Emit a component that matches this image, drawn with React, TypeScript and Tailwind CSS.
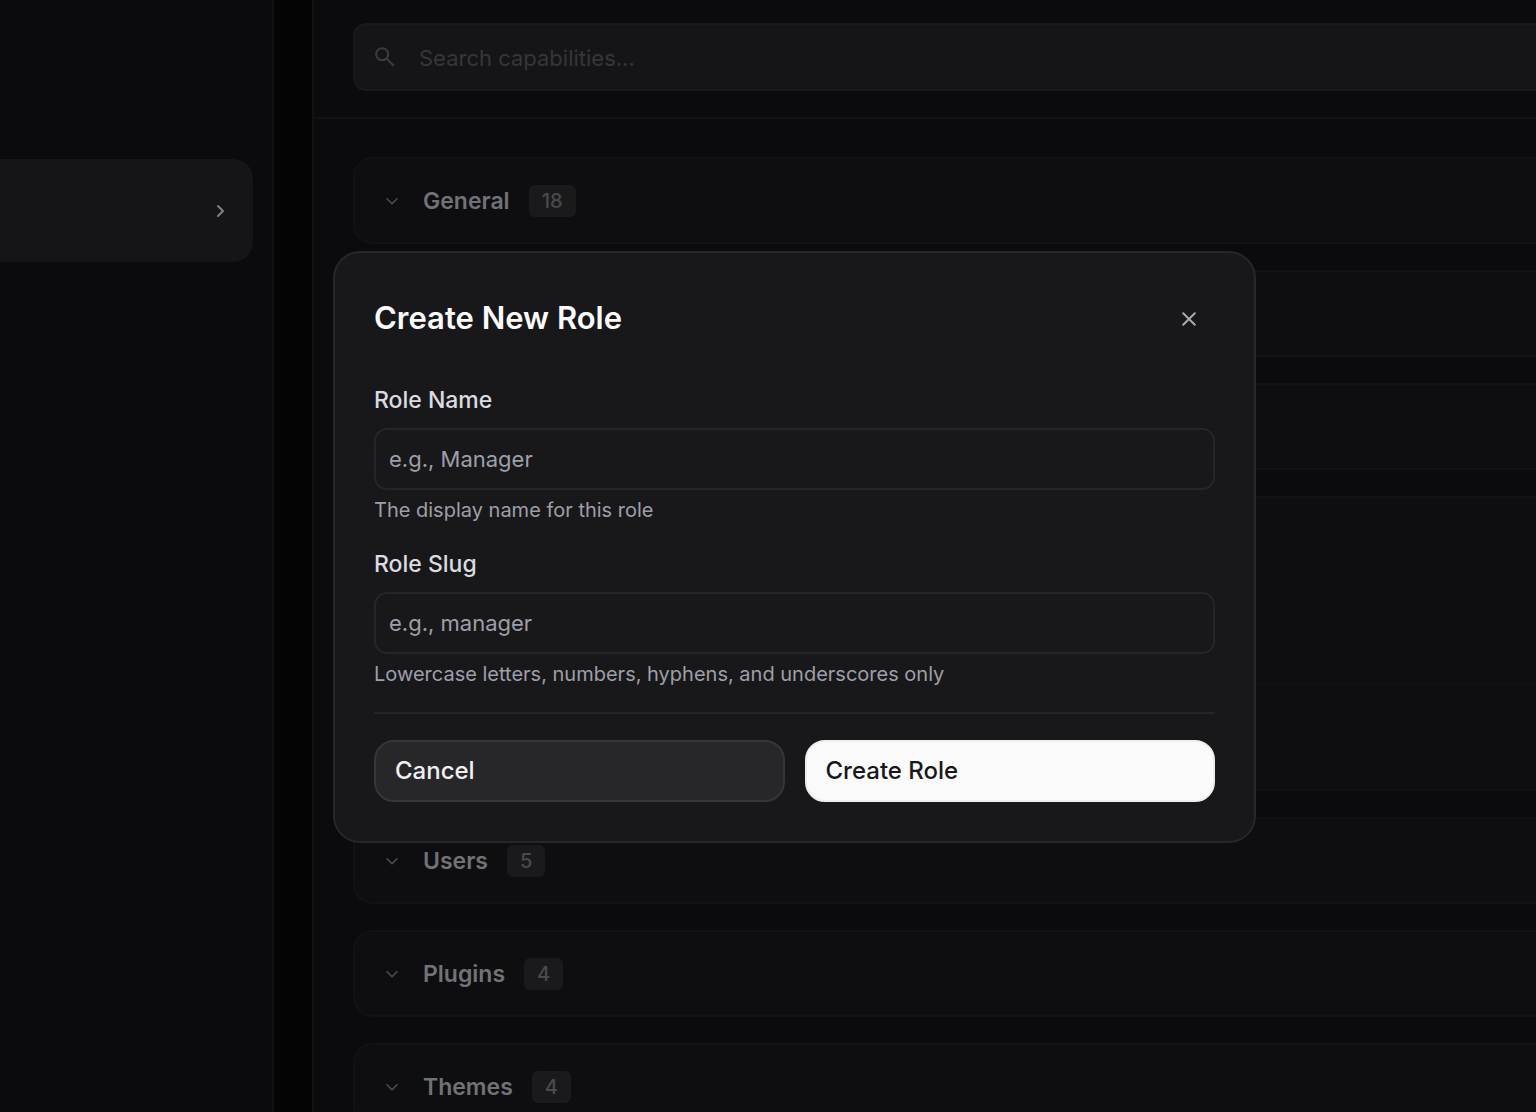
import { ReactNode } from "react";

const groupClass =
  "overflow-hidden rounded-[20px] border-2 border-[#121214] bg-[#0e0e10]";

function ChevronDown() {
  return (
    <svg
      viewBox="0 0 14 14"
      className="size-3.5 shrink-0 text-[#4c4c4f]"
      fill="none"
      stroke="currentColor"
      strokeWidth="1.6"
      strokeLinecap="round"
      strokeLinejoin="round"
      aria-hidden="true"
    >
      <path d="M2 4.7l5 5 5-5" />
    </svg>
  );
}

function CapabilityGroup({
  title,
  count,
  children,
}: {
  title?: string;
  count?: number;
  children?: ReactNode;
}) {
  return (
    <section className={groupClass}>
      <div className="flex h-[83px] items-center">
        {title && (
          <button type="button" className="flex items-center pl-[30px]">
            <ChevronDown />
            <span className="ml-6 text-[23px] leading-8 font-semibold text-[#727276]">
              {title}
            </span>
            <span className="ml-[19px] rounded-md bg-[#1a1a1c] px-[13px] text-xl leading-8 font-medium text-[#4a4a4d]">
              {count}
            </span>
          </button>
        )}
      </div>
      {children}
    </section>
  );
}

function Field({
  id,
  label,
  placeholder,
  hint,
}: {
  id: string;
  label: string;
  placeholder: string;
  hint: string;
}) {
  return (
    <div className="flex flex-col">
      <label
        htmlFor={id}
        className="text-[23px] leading-8 font-medium text-[#dcdce0]"
      >
        {label}
      </label>
      <input
        id={id}
        type="text"
        placeholder={placeholder}
        aria-describedby={`${id}-hint`}
        className="mt-3 h-[62px] w-full rounded-[13px] border-2 border-[#262629] bg-transparent px-[13px] text-[22px] text-[#fafafa] outline-none placeholder:text-[#9f9fa9]"
      />
      <p
        id={`${id}-hint`}
        className="mt-1.5 text-xl leading-7 text-[#9f9fa9]"
      >
        {hint}
      </p>
    </div>
  );
}

function CreateRoleDialog() {
  return (
    <div className="fixed inset-0 flex items-start pt-[251px] pr-[280px] pl-[333px]">
      <div
        role="dialog"
        aria-modal="true"
        aria-labelledby="dialog-title"
        className="w-full rounded-[27px] border-2 border-[#272729] bg-[#18181a] px-[39px] pt-10 pb-[39px]"
      >
        <div className="flex h-[51px] items-center justify-between">
          <h2
            id="dialog-title"
            className="text-[31px] font-semibold text-[#fafafa]"
          >
            Create New Role
          </h2>
          <button
            type="button"
            aria-label="Close"
            className="grid size-[52px] place-items-center text-[#a9a9b1]"
          >
            <svg
              viewBox="0 0 16 16"
              className="size-4"
              fill="none"
              stroke="currentColor"
              strokeWidth="2"
              strokeLinecap="round"
              aria-hidden="true"
            >
              <path d="M2.2 2.2l11.6 11.6M13.8 2.2L2.2 13.8" />
            </svg>
          </button>
        </div>

        <form className="mt-10">
          <div className="flex flex-col gap-6">
            <Field
              id="role-name"
              label="Role Name"
              placeholder="e.g., Manager"
              hint="The display name for this role"
            />
            <Field
              id="role-slug"
              label="Role Slug"
              placeholder="e.g., manager"
              hint="Lowercase letters, numbers, hyphens, and underscores only"
            />
          </div>
          <div className="mt-6 grid grid-cols-2 gap-5 border-t-2 border-[#252527] pt-[26px]">
            <button
              type="button"
              className="h-[62px] rounded-[20px] border-2 border-[#363638] bg-[#272729] px-[19px] text-left text-2xl font-medium text-[#f0f0f2]"
            >
              Cancel
            </button>
            <button
              type="submit"
              className="h-[62px] rounded-[20px] border-2 border-[#eeeeee] bg-[#fafafa] px-[19px] text-left text-2xl font-medium text-[#18181b]"
            >
              Create Role
            </button>
          </div>
        </form>
      </div>
    </div>
  );
}

export default function App() {
  return (
    <div className="flex h-screen overflow-hidden bg-[#040405] font-['Inter','Liberation_Sans',sans-serif]">
      <aside className="w-[274px] shrink-0 border-r-2 border-[#121214] bg-[#0b0b0d] pt-[159px] pr-[19px]">
        <button
          type="button"
          aria-label="Open role"
          className="flex h-[103px] w-full items-center justify-end rounded-r-[20px] bg-[#151517] pr-[26px] text-[#808083]"
        >
          <svg
            viewBox="0 0 14 14"
            className="size-3.5"
            fill="none"
            stroke="currentColor"
            strokeWidth="2"
            strokeLinecap="round"
            strokeLinejoin="round"
            aria-hidden="true"
          >
            <path d="M5 2l5 5-5 5" />
          </svg>
        </button>
      </aside>

      <main className="ml-[38px] min-w-0 flex-1 border-l-2 border-[#121214] bg-[#0b0b0d]">
        <div className="border-b-2 border-[#121214] pt-[23px] pb-[26px] pl-[39px]">
          <label className="flex h-[68px] items-center rounded-l-[13px] border-2 border-r-0 border-[#19191b] bg-[#151517] pl-5">
            <svg
              viewBox="0 0 20 20"
              className="size-5 shrink-0 text-[#3c3c3f]"
              fill="none"
              stroke="currentColor"
              strokeWidth="2"
              aria-hidden="true"
            >
              <circle cx="7.2" cy="7.2" r="6" />
              <path d="M11.5 11.5l7.5 7.5" />
            </svg>
            <input
              type="search"
              aria-label="Search capabilities"
              placeholder="Search capabilities..."
              className="ml-6 min-w-0 flex-1 bg-transparent pt-0.5 text-[22px] text-[#fafafa] outline-none placeholder:text-[#363639]"
            />
          </label>
        </div>

        <div className="-mr-6 flex flex-col gap-[26px] pt-[38px] pl-[39px]">
          <CapabilityGroup title="General" count={18} />
          <CapabilityGroup />
          <CapabilityGroup />
          <CapabilityGroup>
            <div className="h-[103px] border-b border-[#121214]" />
            <div className="h-[105px]" />
          </CapabilityGroup>
          <CapabilityGroup title="Users" count={5} />
          <CapabilityGroup title="Plugins" count={4} />
          <CapabilityGroup title="Themes" count={4} />
        </div>
      </main>

      <CreateRoleDialog />
    </div>
  );
}
